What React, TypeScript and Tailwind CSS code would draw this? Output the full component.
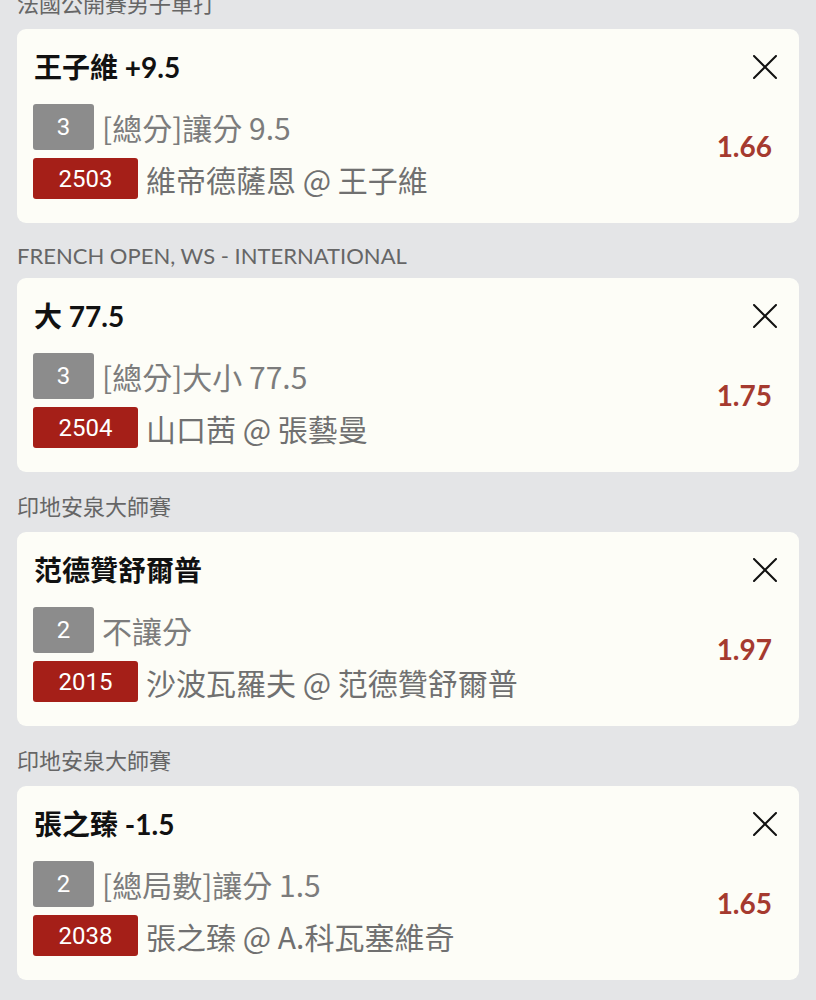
import React from "react";

type Bet = {
  league: string;
  en?: boolean;
  title: string;
  count: string;
  market: string;
  code: string;
  match: string;
  odds: string;
};

const bets: Bet[] = [
  {
    league: "法國公開賽男子單打",
    title: "王子維 +9.5",
    count: "3",
    market: "[總分]讓分 9.5",
    code: "2503",
    match: "維帝德薩恩 @ 王子維",
    odds: "1.66",
  },
  {
    league: "FRENCH OPEN, WS - INTERNATIONAL",
    en: true,
    title: "大 77.5",
    count: "3",
    market: "[總分]大小 77.5",
    code: "2504",
    match: "山口茜 @ 張藝曼",
    odds: "1.75",
  },
  {
    league: "印地安泉大師賽",
    title: "范德贊舒爾普",
    count: "2",
    market: "不讓分",
    code: "2015",
    match: "沙波瓦羅夫 @ 范德贊舒爾普",
    odds: "1.97",
  },
  {
    league: "印地安泉大師賽",
    title: "張之臻 -1.5",
    count: "2",
    market: "[總局數]讓分 1.5",
    code: "2038",
    match: "張之臻 @ A.科瓦塞維奇",
    odds: "1.65",
  },
];

const latoCjk = "font-['Lato','Noto_Sans_CJK_TC',sans-serif]";

function CloseIcon() {
  return (
    <svg width="24" height="24" viewBox="0 0 24 24" fill="none">
      <path d="M1 1L23 23M23 1L1 23" stroke="#111" strokeWidth="2" strokeLinecap="round" />
    </svg>
  );
}

function BetCard({ b }: { b: Bet }) {
  return (
    <div className="mx-[17px] rounded-[9px] bg-[#fdfdf7] pl-[16px] pr-[22px] pt-[20px] pb-[24px]">
      <div className="flex h-[36px] items-center justify-between">
        <div
          className={`${latoCjk} pl-[1px] text-[28px] font-bold leading-none text-[#111]`}
        >
          {b.title}
        </div>
        <CloseIcon />
      </div>
      <div className="mt-[19px] flex items-start justify-between">
        <div className="flex flex-col gap-[8px]">
          <div className="flex items-center">
            <div className="flex h-[46px] w-[61px] items-center justify-center rounded-[3px] bg-[#8c8c8c] font-['Roboto',sans-serif] text-[24px] text-white">
              {b.count}
            </div>
            <div className="ml-[8px] font-['Noto_Sans_CJK_TC',sans-serif] text-[30px] leading-none text-[#7c7c7c]">
              {b.market}
            </div>
          </div>
          <div className="flex items-center">
            <div className="flex h-[41px] w-[105px] items-center justify-center rounded-[3px] bg-[#a51f18] font-['Roboto',sans-serif] text-[24px] text-white">
              {b.code}
            </div>
            <div className="ml-[8px] font-['Noto_Sans_CJK_TC',sans-serif] text-[30px] leading-none text-[#707070]">
              {b.match}
            </div>
          </div>
        </div>
        <div className="mr-[5px] mt-[26px] font-['Lato',sans-serif] text-[28px] font-bold leading-[32px] text-[#a53a2f]">
          {b.odds}
        </div>
      </div>
    </div>
  );
}

export default function App() {
  return (
    <div className="h-[1000px] w-full overflow-hidden bg-[#e4e5e7]">
      <div className="-mt-[31px]">
        {bets.map((b, i) => (
          <div key={i}>
            <div
              className={`flex items-center pt-[10px] pl-[17px] ${latoCjk} text-[22px] leading-none text-[#666] ${
                b.en ? "h-[55px]" : "h-[60px]"
              }`}
            >
              {b.league}
            </div>
            <BetCard b={b} />
          </div>
        ))}
      </div>
    </div>
  );
}
